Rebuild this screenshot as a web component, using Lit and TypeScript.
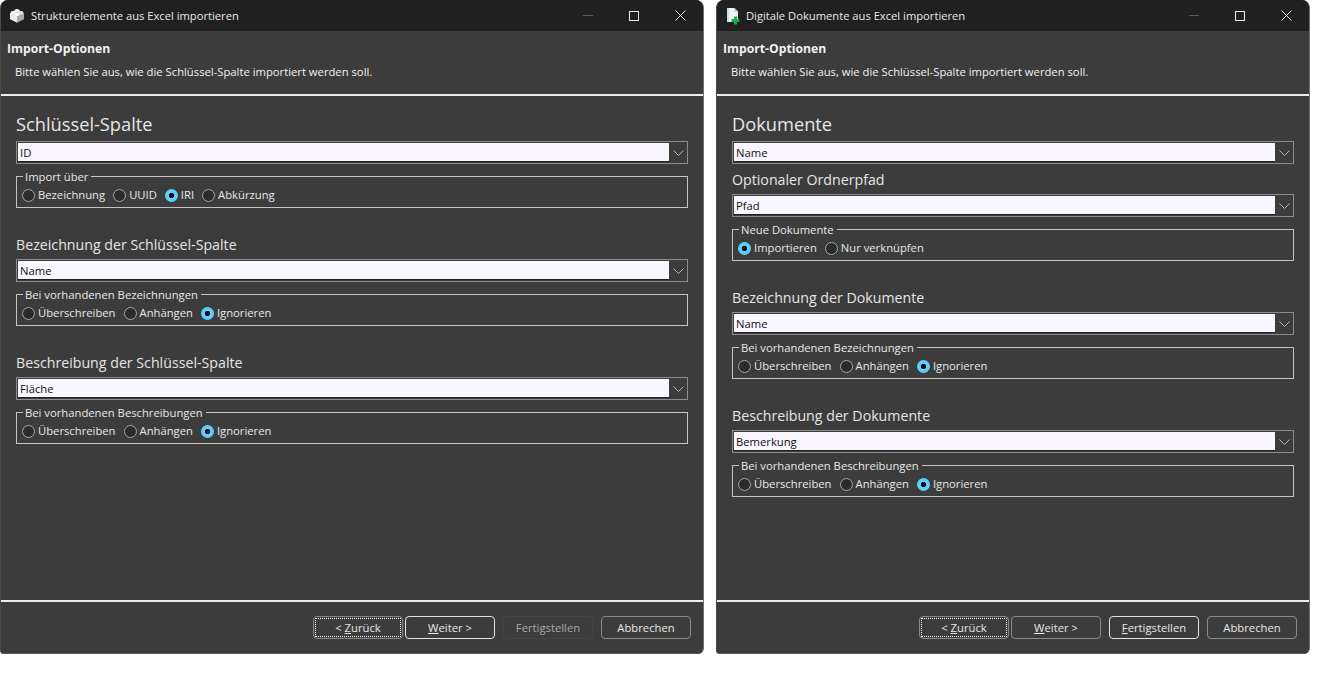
import { LitElement, html, css, svg } from 'lit';
import { customElement, property } from 'lit/decorators.js';

type Group = { legend: string; options: string[]; checked: number };
type Section = { title: string; big?: boolean; tight?: boolean; value: string; group?: Group };

const chevron = html`<svg width="11" height="6" viewBox="0 0 11 6"><path d="M.5.5 5.5 5.5 10.5.5" fill="none" stroke="#b5b5b5" stroke-width="1"/></svg>`;

const brick = svg`<path d="M1 6 8 2.500 15 6v6l-7 3.500L1 12z" fill="#d4d4d4"/><path d="M8 9.500V15.500L1 12V6z" fill="#ececec"/><path d="M8 9.500V15.500L15 12V6z" fill="#a9a9a9"/><ellipse cx="8" cy="3.400" rx="2.600" ry="1.500" fill="#f4f4f4"/><ellipse cx="4.200" cy="5.500" rx="2.400" ry="1.400" fill="#fafafa"/><ellipse cx="11.800" cy="5.500" rx="2.400" ry="1.400" fill="#e4e4e4"/><ellipse cx="8" cy="7.500" rx="2.400" ry="1.400" fill="#fff"/>`;

const docPlus = svg`<path d="M2 1H9.500L13 4.500V15H2z" fill="#eef3f8"/><path d="M9.500 1V4.500H13z" fill="#a8bac8"/><path d="M2 1V15H4V1z" fill="#cfdbe6"/><path d="M9 9.500h3v2.500h2.500v3H12V17.500H9V15H6.500v-3H9z" fill="#1fae3c"/>`;

@customElement('import-window')
class ImportWindow extends LitElement {
  @property() caption = '';
  @property({ type: Boolean }) canFinish = false;
  @property({ type: Boolean }) doc = false;
  @property({ attribute: false }) sections: Section[] = [];

  static styles = css`
    :host {
      display: flex;
      flex-direction: column;
      height: 654px;
      box-sizing: border-box;
      background: #3c3c3c;
      border-radius: 8px 8px 6px 4px;
      overflow: hidden;
      color: #f2f2f2;
      font-family: 'Open Sans', 'Noto Sans', sans-serif;
      font-size: 11.25px;
      border-right: 1px solid #6e6e6e;
      border-left: 1px solid #4a4a4a;
    }
    .titlebar {
      height: 31px;
      flex: none;
      background: #202020;
      display: flex;
      align-items: center;
      padding-left: 8px;
      font-size: 11.2px;
      color: #e8e8e8;
    }
    .titlebar svg.logo { margin-right: 6px; flex: none; }
    .titlebar svg.logo.doc { margin-right: 5px; }
    .caption { flex: 1; }
    .ctl { width: 46px; height: 31px; display: flex; align-items: center; justify-content: center; }
    .head { height: 65px; flex: none; box-sizing: border-box; border-bottom: 2px solid #ececec; padding: 10px 6px 0; }
    .head b { display: block; font-size: 12.2px; font-weight: 700; line-height: 16px; }
    .head p { margin: 7px 0 0 8px; line-height: 15px; font-size: 11.26px; }
    .body { flex: 1; padding: 19px 15px 0; }
    h2 { margin: 0; font-weight: 400; font-size: 14.2px; line-height: 20px; color: #e6e6e6; }
    h2.big { font-size: 18.25px; line-height: 24px; margin-bottom: 5px; margin-top: -3px; }
    .section { margin-bottom: 27px; }
    .section.tight { margin-bottom: 6px; }
    .section h2:not(.big) { margin-bottom: 4px; }
    .combo {
      height: 23px;
      box-sizing: border-box;
      border: 1px solid #8c8c8c;
      display: flex;
    }
    .field {
      flex: 1;
      margin: 1px 0 1px 1px;
      background: #f9f6ff;
      border-bottom: 1px solid #222;
      color: #111;
      line-height: 19px;
      padding-left: 2px;
      font-size: 11.25px;
    }
    .arrow { width: 18px; display: flex; align-items: center; justify-content: center; }
    fieldset {
      margin: 6px 0 0;
      padding: 0 5px;
      border: 1px solid #c4c4c4;
      min-width: 0;
      height: 38px;
      box-sizing: border-box;
    }
    legend { margin-left: 1px; padding: 0 3px 0 2px; line-height: 13px; color: #e8e8e8; }
    .opts { display: flex; gap: 8px; margin-top: 4px; }
    .opt { display: flex; align-items: center; gap: 3px; line-height: 16px; color: #e8e8e8; }
    .radio {
      width: 11px; height: 11px;
      border: 1px solid #a8a8a8;
      border-radius: 50%;
      background: #2b2b2b;
    }
    .radio.on {
      border: none;
      width: 13px; height: 13px;
      background: radial-gradient(circle, #111 0 2.4px, #60cdff 3px);
    }
    .foot {
      height: 54px;
      flex: none;
      box-sizing: border-box;
      border-top: 2px solid #ececec;
      border-bottom: 1px solid #5a5a5a;
      display: flex;
      justify-content: flex-end;
      padding: 14px 12px 0 0;
    }
    .btn {
      width: 90px;
      height: 23px;
      box-sizing: border-box;
      border: 1px solid #8a8a8a;
      border-radius: 4px;
      display: flex;
      align-items: center;
      justify-content: center;
      margin-left: 8px;
      color: #e8e8e8;
    }
    .btn.near { margin-left: 2px; }
    .btn.primary { border-color: #e4e4e4; }
    .btn.focus span { outline: 1px dotted #fff; width: 84px; height: 17px; line-height: 17px; text-align: center; }
    .btn.off { border-color: #444; color: #a8a8a8; }
  `;

  renderSection(s: Section) {
    return html`<div class="section ${s.tight ? 'tight' : ''}">
      <h2 class=${s.big ? 'big' : ''}>${s.title}</h2>
      <div class="combo"><div class="field">${s.value}</div><div class="arrow">${chevron}</div></div>
      ${s.group
        ? html`<fieldset>
            <legend>${s.group.legend}</legend>
            <div class="opts">
              ${s.group.options.map(
                (o, i) => html`<div class="opt"><span class="radio ${i === s.group!.checked ? 'on' : ''}"></span>${o}</div>`
              )}
            </div>
          </fieldset>`
        : ''}
    </div>`;
  }

  render() {
    return html`
      <div class="titlebar">
        <svg class="logo ${this.doc ? 'doc' : ''}" width="16" height="18" viewBox="0 0 16 18">${this.doc ? docPlus : brick}</svg>
        <span class="caption">${this.caption}</span>
        <span class="ctl"><svg width="10" height="1"><path d="M0 .5h10" stroke="#5c5c5c"/></svg></span>
        <span class="ctl"><svg width="10" height="10"><rect x=".5" y=".5" width="9" height="9" fill="none" stroke="#ececec"/></svg></span>
        <span class="ctl"><svg width="11" height="11"><path d="M.5.5l10 10M10.500.5l-10 10" stroke="#ececec" fill="none"/></svg></span>
      </div>
      <div class="head">
        <b>Import-Optionen</b>
        <p>Bitte wählen Sie aus, wie die Schlüssel-Spalte importiert werden soll.</p>
      </div>
      <div class="body">${this.sections.map((s) => this.renderSection(s))}</div>
      <div class="foot">
        <div class="btn focus"><span>&lt; <u>Z</u>urück</span></div>
        <div class="btn near ${this.canFinish ? '' : 'primary'}"><span><u>W</u>eiter &gt;</span></div>
        <div class="btn ${this.canFinish ? 'primary' : 'off'}"><span>${this.canFinish ? html`<u>F</u>ertigstellen` : 'Fertigstellen'}</span></div>
        <div class="btn"><span>Abbrechen</span></div>
      </div>
    `;
  }
}

const labelOpts = ['Überschreiben', 'Anhängen', 'Ignorieren'];

const first: Section[] = [
  { title: 'Schlüssel-Spalte', big: true, value: 'ID', group: { legend: 'Import über', options: ['Bezeichnung', 'UUID', 'IRI', 'Abkürzung'], checked: 2 } },
  { title: 'Bezeichnung der Schlüssel-Spalte', value: 'Name', group: { legend: 'Bei vorhandenen Bezeichnungen', options: labelOpts, checked: 2 } },
  { title: 'Beschreibung der Schlüssel-Spalte', value: 'Fläche', group: { legend: 'Bei vorhandenen Beschreibungen', options: labelOpts, checked: 2 } },
];

const second: Section[] = [
  { title: 'Dokumente', big: true, tight: true, value: 'Name' },
  { title: 'Optionaler Ordnerpfad', value: 'Pfad', group: { legend: 'Neue Dokumente', options: ['Importieren', 'Nur verknüpfen'], checked: 0 } },
  { title: 'Bezeichnung der Dokumente', value: 'Name', group: { legend: 'Bei vorhandenen Bezeichnungen', options: labelOpts, checked: 2 } },
  { title: 'Beschreibung der Dokumente', value: 'Bemerkung', group: { legend: 'Bei vorhandenen Beschreibungen', options: labelOpts, checked: 2 } },
];

@customElement('app-root')
class AppRoot extends LitElement {
  static styles = css`
    :host { display: flex; gap: 12px; height: 680px; background: #fff; }
    .a { width: 704px; flex: none; }
    .b { width: 594px; flex: none; }
  `;

  render() {
    return html`
      <import-window class="a" caption="Strukturelemente aus Excel importieren" .sections=${first}></import-window>
      <import-window class="b" doc canFinish caption="Digitale Dokumente aus Excel importieren" .sections=${second}></import-window>
    `;
  }
}
